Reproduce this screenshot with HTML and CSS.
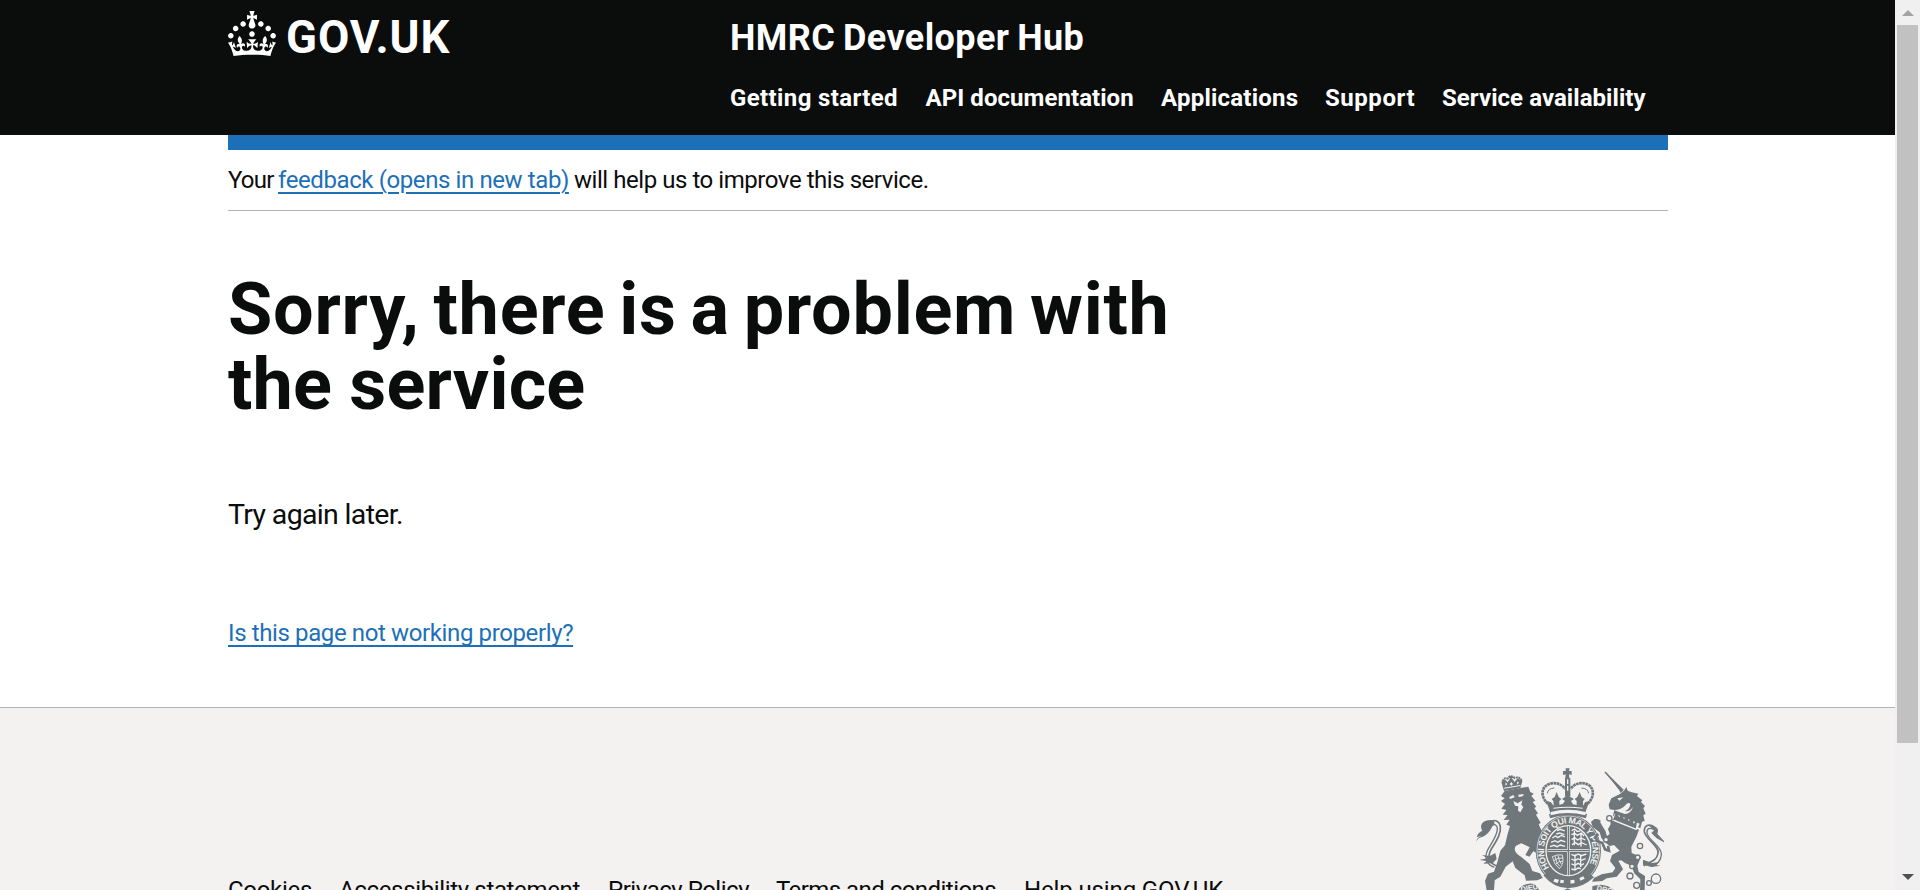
FILE: index.html
```
<!DOCTYPE html>
<html lang="en">
<head>
<meta charset="utf-8">
<title>Sorry, there is a problem with the service</title>
<link rel="stylesheet" href="styles.css">
</head>
<body>
<div class="page">
  <header class="header">
    <div class="container header-row">
      <a class="logo">
        <svg class="crown" viewBox="0 0 32 30" width="48" height="45" fill="#fff"><path d="M22.6 10.4c-1 .4-2-.1-2.4-1-.4-.9.1-2 1-2.4.9-.4 2 .1 2.4 1s-.1 2-1 2.4m-5.9 6.7c-.9.4-2-.1-2.4-1-.4-.9.1-2 1-2.4.9-.4 2 .1 2.4 1s-.1 2-1 2.4m10.8-3.7c-1 .4-2-.1-2.4-1-.4-.9.1-2 1-2.4.9-.4 2 .1 2.4 1s0 2-1 2.4m3.3 4.8c-1 .4-2-.1-2.4-1-.4-.9.1-2 1-2.4.9-.4 2 .1 2.4 1s-.1 2-1 2.4M17 4.7l2.3 1.2V2.5l-2.3.7-.2-.2.9-3h-3.4l.9 3-.2.2c-.1.1-2.3-.7-2.3-.7v3.4L15 4.7c.1.1.1.2.2.2l-1.3 4c-.1.2-.1.4-.1.6 0 1.1.8 2 1.9 2.2h.7c1-.2 1.9-1.1 1.9-2.1 0-.2 0-.4-.1-.6l-1.3-4c-.1-.2 0-.2.1-.3m-7.6 5.7c.9.4 2-.1 2.4-1 .4-.9-.1-2-1-2.4-.9-.4-2 .1-2.4 1s0 2 1 2.4m-5 3c.9.4 2-.1 2.4-1 .4-.9-.1-2-1-2.4-.9-.4-2 .1-2.4 1s.1 2 1 2.4m-3.2 4.8c.9.4 2-.1 2.4-1 .4-.9-.1-2-1-2.4-.9-.4-2 .1-2.4 1s0 2 1 2.4m14.8 11c4.4 0 8.6.3 12.3.8 1.1-4.5 2.4-7 3.7-8.8l-2.5-.9c.2 1.3.3 1.9 0 2.7-.4-.4-.8-1.1-1.1-2.3l-1.2 4c.7-.5 1.3-.8 2-.9-1.1 2.5-2.6 3.1-3.5 3-1.1-.2-1.7-1.2-1.5-2.1.3-1.2 1.5-1.5 2.1-.1 1.1-2.3-.8-3-2-2.3 1.9-1.9 2.1-3.5.6-5.6-2.1 1.6-2.1 3.2-1.2 5.5-1.2-1.4-3.2-.6-2.5 1.6.9-1.4 2.1-.5 1.9.8-.2 1.1-1.7 2.1-3.5 1.9-2.7-.2-2.9-2.1-2.9-3.6.7-.1 1.9.5 2.9 1.9l.4-4.3c-1.1 1.1-2.1 1.4-3.2 1.4.4-1.2 2.1-3 2.1-3h-5.4s1.7 1.9 2.1 3c-1.1 0-2.1-.2-3.2-1.4l.4 4.3c1-1.4 2.2-2 2.9-1.9-.1 1.5-.2 3.4-2.9 3.6-1.9.2-3.4-.8-3.5-1.9-.2-1.3 1-2.2 1.9-.8.7-2.3-1.2-3-2.5-1.6.9-2.2.9-3.9-1.2-5.5-1.5 2-1.3 3.7.6 5.6-1.2-.7-3.1 0-2 2.3.6-1.4 1.8-1.1 2.1.1.2.9-.3 1.9-1.5 2.1-.9.2-2.4-.5-3.5-3 .6 0 1.2.3 2 .9l-1.2-4c-.3 1.1-.7 1.9-1.1 2.3-.3-.8-.2-1.4 0-2.7l-2.9.9C1.3 23 2.6 25.5 3.7 30c3.7-.5 7.9-.8 12.3-.8"/></svg>
        <span class="logo-text">GOV.UK</span>
      </a>
      <div class="header-content">
        <a class="service-name">HMRC Developer Hub</a>
        <nav class="nav">
          <a class="nav-item nav-start">Getting started</a>
          <a class="nav-item nav-api">API documentation</a>
          <a class="nav-item nav-apps">Applications</a>
          <a class="nav-item nav-support">Support</a>
          <a class="nav-item nav-avail">Service availability</a>
        </nav>
      </div>
    </div>
  </header>
  <main class="container main">
    <div class="blue-bar"></div>
    <p class="feedback"><span class="feedback-lead">Your</span><a class="link feedback-link">feedback (opens in new tab)</a><span class="feedback-tail">will help us to improve this service.</span></p>
    <h1 class="heading">Sorry, there is a problem with<br><span class="heading-end">the service</span></h1>
    <p class="body-text">Try again later.</p>
    <a class="link report-link">Is this page not working properly?</a>
  </main>
  <footer class="footer">
    <div class="container footer-row">
      <ul class="footer-links">
        <li class="fl-cookies">Cookies</li>
        <li class="fl-access">Accessibility statement</li>
        <li class="fl-privacy">Privacy Policy</li>
        <li class="fl-terms">Terms and conditions</li>
        <li class="fl-help">Help using GOV.UK</li>
      </ul>
      <svg class="arms" viewBox="48 52 564 368" width="188" height="122.67" fill="#6f777b">
        <!-- lion: tail, body, head and crown -->
        <path d="M112 346C84 338 82 316 94 295C108 272 124 250 121 228C118 210 102 205 92 214" fill="none" stroke="#6f777b" stroke-width="5"/>
        <path d="M103 350C80 342 72 322 82 300C92 280 112 256 112 234C112 222 102 218 94 226" fill="none" stroke="#6f777b" stroke-width="4"/>
        <path d="M48 273C50 263 58 258 66 254L51 260C52 248 60 244 67 240C56 222 70 208 92 208C104 210 108 218 98 225C89 245 76 256 66 259Q54 261 48 273ZM106 307L89 316L66 313L82 323L58 328L80 331L70 339L98 338L110 325Z"/>
        <path d="M134 121L205 108L211 124L221 129L214 136L226 150L218 154L229 168L223 172L234 188L228 192L242 216L236 221L245 241L251 266L263 276L247 280L256 291L242 289L248 302L232 298L235 309L220 302L208 318L196 313L209 290L184 278L168 285C158 298 169 309 184 319L209 340L217 361L240 368L248 382L232 389L198 390L194 374L166 352L158 332L137 348L121 378L104 389L102 420L80 420L75 390L84 369L102 363L112 335L121 300L135 284L142 253L150 226L139 222L149 207L131 208L143 193L128 192L139 178L124 174L135 160L123 151L134 143L123 136Z"/>
        <path d="M124 94L134 86L143 95L153 80L164 94L173 83L187 92L181 113L132 121Z"/>
        <g fill="none" stroke="#6f777b"><path d="M128 92Q132 79 143 84Q152 70 164 82Q179 76 185 91" stroke-width="6" stroke-dasharray="6 2"/><path d="M152 76V92M146 81H159" stroke-width="4"/></g>
        <g fill="#f3f2f1"><path d="M148 139L160 133L164 140L150 145ZM175 132L192 130L188 137L176 139ZM160 151L173 158L187 149L184 162L190 169L181 185L174 180L175 167L165 165Z"/><path d="M132 111L181 103L182 106L133 114ZM137 95l5 6-6 4ZM154 94l5 6-5 5-5-5ZM171 92l6 4-5 6Z"/></g>
        <!-- central crown -->
        <path d="M317 53h12l-2 8h8v12l-8-2 1 11h-12l1-11-8 2V61h8Z"/>
        <g fill="none" stroke="#6f777b"><path d="M271 165C244 147 240 116 261 103C279 92 305 98 315 115M376 165C402 147 406 116 386 103C368 92 342 98 332 115" stroke-width="8" stroke-dasharray="8 1.5"/><path d="M262 128Q264 113 283 112M386 128Q383 113 364 112" stroke-width="3"/></g>
        <path d="M315 82h16v55h-16ZM259 150L273 155L281 166L280 151L275 145L284 139L290 124L296 139L304 145L298 151V162L308 160L315 151L306 145L318 137L324 132L330 138L342 145L333 151L339 161L350 163V151L344 145L352 139L359 124L365 139L374 145L369 152V166L375 155L389 150L374 190Q323 176 272 190ZM267 190Q323 174 381 190L378 203Q323 184 270 203Z"/>
        <g fill="#f3f2f1"><path d="M321 86h4v14h-4ZM321 105h4v15h-4ZM280 171Q323 165 368 171V174Q323 168 280 174ZM272 184Q323 170 376 184V194Q323 180 272 194Z"/></g>
        <!-- garter and shield -->
        <ellipse cx="325" cy="300" rx="98" ry="108"/>
        <ellipse cx="325" cy="300" rx="94" ry="104" fill="none" stroke="#f3f2f1" stroke-width="2"/>
        <ellipse cx="325" cy="300" rx="67" ry="75" fill="#6f777b" stroke="#f3f2f1" stroke-width="4"/>
        <defs><path id="motto" d="M268 351A73 82 0 1 1 382 351"/></defs>
        <text class="motto" textLength="338" lengthAdjust="spacing"><textPath href="#motto">HONI SOIT QUI MAL Y PENSE</textPath></text>
        <path d="M263 300H388M325 226V374" stroke="#f3f2f1" stroke-width="8"/>
        <path d="M263 300H388M325 226V374" stroke="#6f777b" stroke-width="4"/>
        <g fill="none" stroke="#f3f2f1" stroke-width="4"><path d="M277 262l10-6 7 5 10-7 11 5M273 275l12-5 8 5 10-6 13 5M270 288l12-4 9 4 10-5 14 4M291 240l10-4 13 5M289 250l10-3 14 5"/><path d="M335 240l9-5 7 7 10-1M334 252l10-4 8 6 12-7 8 9M335 267l9-6 9 7 10-6 13 6M336 282l10-6 9 6 10-6 15 7M343 240v44M363 248v40"/><path d="M334 311l11 5 9-6 10 5 15-5M334 325l11 5 9-6 10 5 13-5M334 340l11 4 9-6 10 5 8-4M334 355l11 3 9-6 9 2M345 311v48M362 311v38"/><path d="M277 318Q291 310 307 313Q314 338 298 354Q282 342 277 318ZM285 316Q288 337 299 347M294 314Q296 329 304 340M281 330Q293 320 309 322M286 341Q296 330 308 332" stroke-width="2.5"/></g>
        <path d="M262 368Q323 416 386 366L402 380Q365 414 324 412Q281 413 250 374Z"/>
        <g fill="#f3f2f1"><path d="M284 384l13 3-4 10-13-4ZM302 387l10 2-2 9-10-2ZM331 389l12-2 1 10-12 2ZM358 382l12-5 4 7-13 6Z"/></g>
        <!-- unicorn -->
        <path d="M435 64L438 65L491 117L482 127L478 119Z"/>
        <path d="M435 64L486 121" stroke="#6f777b" stroke-width="4"/>
        <path d="M480 130L493 119L499 109L503 120L515 125L535 129L531 136L547 149L543 154L555 166L550 173L557 189L550 194L554 211L546 213L541 233L459 195L463 178L449 176L446 162L454 143Z"/>
        <path d="M450 203L537 237L529 259L514 288L515 307L543 318L532 345L536 364L555 376L554 420H540L541 386L523 368L514 345L495 337L484 329L475 330L489 356L470 378L440 383L427 391L396 393L402 382L425 371L458 365L466 352L450 331L456 313L479 300L462 283L450 286L434 275L424 262L419 245L398 229L393 213L404 205L419 212L429 229L436 240L441 256L449 250L444 235L452 221Z"/>
        <path d="M401 212Q412 205 420 214M415 250L407 258L411 271L427 277L435 296L447 300L444 285" fill="none" stroke="#6f777b" stroke-width="8"/>
        <path d="M464 189L539 219L530 238L456 209Z" fill="#f3f2f1"/>
        <path d="M468 184l10 16 7-12 7 18 9-14 5 20 10-13 5 20 11-11-5 29-68-30Z"/>
        <path d="M462 209L529 236" stroke="#f3f2f1" stroke-width="4"/>
        <path d="M472 143l18-3-12 10ZM462 178Q485 178 496 164Q504 154 511 159Q510 176 495 181Q508 185 519 169Q512 190 495 190L479 185Z" fill="#f3f2f1"/>
        <g fill="none" stroke="#6f777b"><path d="M551 346C568 331 588 335 594 309C600 286 556 266 553 243C552 224 567 218 583 229" stroke-width="5"/><path d="M573 347C587 346 604 331 604 309C603 286 565 269 561 247C560 233 568 230 581 236" stroke-width="4"/></g>
        <path d="M564 224C590 224 599 235 592 249L612 271V275L590 263L574 247L582 239Q570 227 564 224ZM549 327L577 337L598 334L589 343L601 345L574 349L549 342Z"/>
        <g fill="#f3f2f1" stroke="#6f777b" stroke-width="4"><circle cx="448" cy="203" r="8"/><circle cx="438" cy="267" r="7"/><circle cx="540" cy="286" r="8"/><circle cx="533" cy="320" r="7"/><circle cx="516" cy="347" r="7"/><circle cx="510" cy="376" r="9"/><circle cx="530" cy="404" r="9"/><circle cx="588" cy="384" r="14"/><circle cx="567" cy="397" r="7"/></g>
        <!-- motto ribbon -->
        <path d="M175 420Q181 402 207 399Q229 397 238 420ZM397 407Q421 397 444 407L465 420H397ZM308 420l15-7 14 7Z"/>
        <text class="ribbon" x="183" y="423" transform="rotate(-9 183 423)">DIEU</text>
        <text class="ribbon" x="409" y="418" transform="rotate(13 409 418)">DROIT</text>
      </svg>
    </div>
  </footer>
</div>
<div class="scrollbar">
  <span class="arrow arrow-up"></span>
  <span class="thumb"></span>
  <span class="arrow arrow-down"></span>
</div>
</body>
</html>
```
FILE: styles.css
```
* { box-sizing: border-box; }
body {
  margin: 0;
  height: 890px;
  overflow: hidden;
  display: flex;
  background: #fff;
  color: #0b0c0c;
  font-family: Roboto, "Liberation Sans", sans-serif;
  font-size: 24px;
  line-height: 30px;
}
.page {
  width: 1895px;
  height: 890px;
  overflow: hidden;
  display: flex;
  flex-direction: column;
}
.container { width: 1440px; margin: 0 auto 0 228px; }
.header { height: 135px; flex: none; background: #0b0c0c; color: #fff; }
.header-row { display: flex; }
.logo { width: 502px; height: 60px; display: flex; padding-top: 11px; }
.crown { display: block; flex: none; }
.logo-text {
  margin-left: 10px;
  font-size: 45.5px;
  line-height: 53px;
  font-weight: 700;
  letter-spacing: .9px;
}
.header-content { display: flex; flex-direction: column; }
.service-name {
  padding-top: 17px;
  font-size: 36px;
  line-height: 42px;
  font-weight: 700;
  letter-spacing: .4px;
  word-spacing: -1.5px;
}
.nav { display: flex; margin-top: 24px; font-weight: 700; white-space: nowrap; }
.nav-start { width: 195.5px; letter-spacing: .38px; }
.nav-api { width: 235.5px; letter-spacing: .06px; }
.nav-apps { width: 164px; letter-spacing: .22px; }
.nav-support { width: 117px; letter-spacing: .55px; }
.nav-avail { letter-spacing: .06px; }
.main { height: 572px; flex: none; }
.blue-bar { height: 15px; background: #1d70b8; }
.feedback {
  margin: 0;
  height: 61px;
  padding-top: 15px;
  border-bottom: 1px solid #b1b4b6;
  display: flex;
  white-space: nowrap;
}
.feedback-lead { width: 50px; letter-spacing: -.8px; }
.feedback-link { width: 291px; letter-spacing: -.4px; }
.feedback-tail { margin-left: 5px; letter-spacing: -.45px; }
.link {
  color: #1d70b8;
  text-decoration: underline;
  text-decoration-thickness: 2px;
  text-underline-offset: 4px;
}
.heading {
  margin: 61px 0 0;
  font-size: 72px;
  line-height: 75px;
  font-weight: 700;
  letter-spacing: .75px;
  word-spacing: -4.8px;
  white-space: nowrap;
}
.heading-end { letter-spacing: .2px; word-spacing: -1px; }
.body-text {
  margin: 74px 0 0;
  font-size: 28.5px;
  line-height: 38px;
  letter-spacing: -.66px;
}
.report-link {
  display: inline-block;
  margin-top: 84px;
  letter-spacing: -.38px;
  text-decoration-skip-ink: none;
}
.footer { flex: 1 0 183px; background: #f3f2f1; border-top: 1px solid #b1b4b6; }
.footer-row { display: flex; justify-content: space-between; padding-right: 4px; }
.footer-links {
  margin: 0;
  padding: 167px 0 0;
  list-style: none;
  display: flex;
  height: 182px;
  overflow: hidden;
  white-space: nowrap;
}
.fl-cookies { width: 111px; letter-spacing: -.3px; }
.fl-access { width: 269px; letter-spacing: -.35px; }
.fl-privacy { width: 168px; letter-spacing: -.48px; }
.fl-terms { width: 248px; letter-spacing: -.55px; }
.fl-help { letter-spacing: -.13px; }
.arms { display: block; margin-top: 60px; flex: none; }
.motto { font: 700 26px "Liberation Sans", sans-serif; fill: #f3f2f1; }
.ribbon { font: 700 22px "Liberation Sans", sans-serif; fill: #f3f2f1; }
.scrollbar {
  width: 25px;
  height: 890px;
  background: #f0f0f0;
  display: flex;
  flex-direction: column;
  align-items: center;
}
.thumb { width: 21px; height: 718px; background: #c1c1c1; }
.arrow { border: 6px solid transparent; border-top-width: 0; border-bottom-width: 0; }
.arrow-up { margin: 10px 0 9px; border-bottom: 6px solid #a3a3a3; }
.arrow-down { margin-top: 131px; border-top: 6px solid #505050; }
```
